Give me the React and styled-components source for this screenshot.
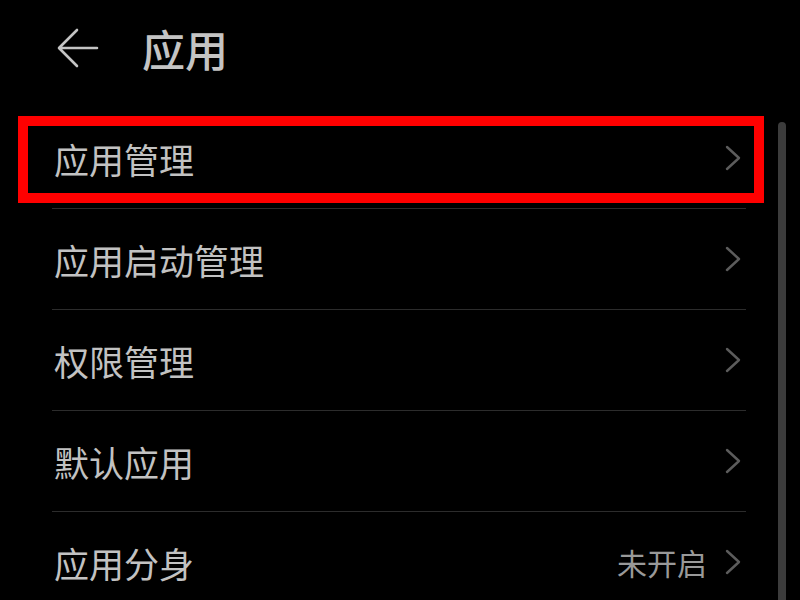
import React from 'react';
import styled, { createGlobalStyle } from 'styled-components';

const items = [
  { label: '应用管理', highlight: true },
  { label: '应用启动管理' },
  { label: '权限管理' },
  { label: '默认应用' },
  { label: '应用分身', value: '未开启' },
];

const GlobalStyle = createGlobalStyle`
  html, body {
    margin: 0;
    padding: 0;
    background: #000;
  }
  body {
    font-family: "Noto Sans CJK SC", "Noto Sans", sans-serif;
  }
`;

const Screen = styled.div`
  position: relative;
  width: 800px;
  height: 600px;
  background: #000;
  overflow: hidden;
`;

const Header = styled.header`
  height: 108px;
  display: flex;
  align-items: center;
  padding: 0 0 12px 56px;
  box-sizing: border-box;
  gap: 42px;
`;

const BackButton = styled.button`
  background: none;
  border: none;
  padding: 0;
  width: 44px;
  height: 44px;
  display: flex;
  align-items: center;
  justify-content: center;
  cursor: pointer;
`;

const Title = styled.h1`
  margin: 0;
  font-size: 43px;
  font-weight: 500;
  color: #c4c4c4;
`;

const List = styled.ul`
  list-style: none;
  margin: 0;
  padding: 0 54px 0 52px;
`;

const Row = styled.li`
  position: relative;
  height: 100px;
  display: flex;
  align-items: center;
  border-bottom: 1px solid #2c2c2c;

  &:last-child {
    border-bottom: none;
  }
`;

const Label = styled.span`
  flex: 1;
  padding-left: 2px;
  font-size: 35px;
  color: #c2c2c2;
`;

const Value = styled.span`
  font-size: 30px;
  color: #999;
  margin-right: 18px;
`;

const Chevron = styled.svg`
  width: 18px;
  height: 26px;
  margin-right: 3px;
`;

const Highlight = styled.div`
  position: absolute;
  left: -34px;
  right: -18px;
  top: 8px;
  bottom: 5px;
  border: 10px solid #ff0000;
  pointer-events: none;
`;

const ScrollBar = styled.div`
  position: absolute;
  left: 778px;
  top: 122px;
  bottom: 0;
  width: 8px;
  background: #3c3c3c;
  border-radius: 4px 4px 0 0;
`;

const App = () => (
  <Screen>
    <GlobalStyle />
    <Header>
      <BackButton aria-label="返回">
        <svg width="42" height="40" viewBox="0 0 42 40" fill="none">
          <path
            d="M40 20H3M20 2L2 20l18 18"
            stroke="#c4c4c4"
            strokeWidth="2.6"
            strokeLinecap="round"
            strokeLinejoin="round"
          />
        </svg>
      </BackButton>
      <Title>应用</Title>
    </Header>
    <List>
      {items.map((item) => (
        <Row key={item.label}>
          <Label>{item.label}</Label>
          {item.value && <Value>{item.value}</Value>}
          <Chevron viewBox="0 0 18 26" fill="none">
            <path d="M2 2l12 11L2 24" stroke="#5c5c5c" strokeWidth="2.4" strokeLinecap="round" strokeLinejoin="round" />
          </Chevron>
          {item.highlight && <Highlight />}
        </Row>
      ))}
    </List>
    <ScrollBar />
  </Screen>
);

export default App;
